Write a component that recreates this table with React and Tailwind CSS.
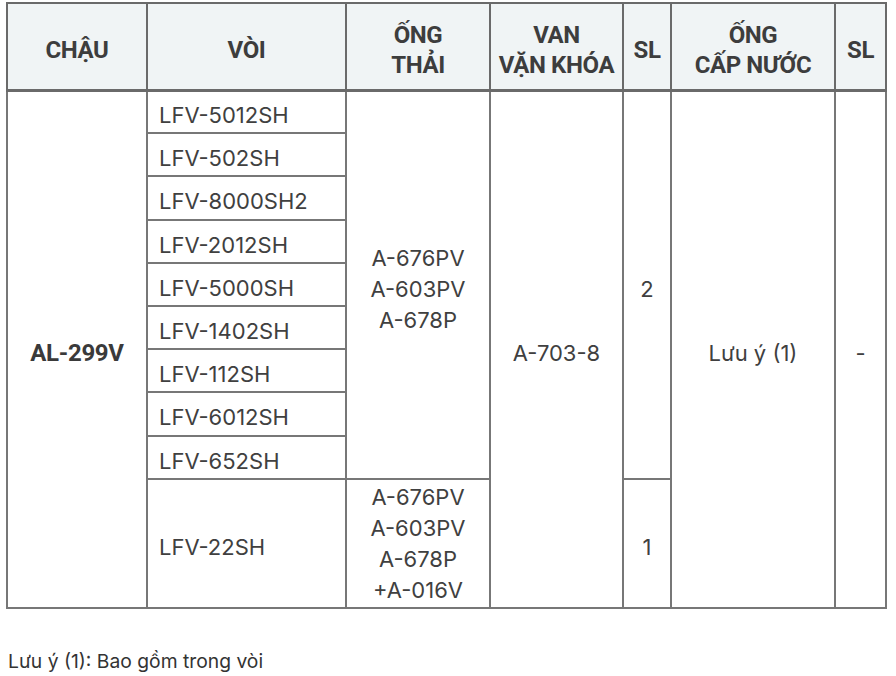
import React from "react";

const vois = [
  "LFV-5012SH",
  "LFV-502SH",
  "LFV-8000SH2",
  "LFV-2012SH",
  "LFV-5000SH",
  "LFV-1402SH",
  "LFV-112SH",
  "LFV-6012SH",
  "LFV-652SH",
];

const bd = "border-2 border-[#777]";
const hd = "border-2 border-[#6a6a6a] border-b-[3px] text-center pt-[7px]";

export default function App() {
  return (
    <div className="w-[896px] h-[676px] bg-white text-[#404040]" style={{ fontFamily: "Inter, 'Noto Sans', sans-serif" }}>
      <div className="pt-[2px] pl-[6px]">
        <table className="table-fixed border-collapse border-2 border-[#6a6a6a] w-[879px]">
          <colgroup>
            <col className="w-[140px]" />
            <col className="w-[199px]" />
            <col className="w-[144px]" />
            <col className="w-[133px]" />
            <col className="w-[48px]" />
            <col className="w-[164px]" />
            <col className="w-[51px]" />
          </colgroup>
          <thead>
            <tr className="bg-[#f0f4f5] h-[87px] text-[24px] leading-[30px] font-bold text-[#3d3d3d] tracking-[-0.4px]" style={{ fontFamily: "Roboto, sans-serif" }}>
              <th className={hd}>CHẬU</th>
              <th className={hd}>VÒI</th>
              <th className={hd}>ỐNG<br />THẢI</th>
              <th className={hd}>VAN<br />VẶN KHÓA</th>
              <th className={hd}>SL</th>
              <th className={hd}>ỐNG<br />CẤP NƯỚC</th>
              <th className={hd}>SL</th>
            </tr>
          </thead>
          <tbody className="text-[22px] leading-[31px]">
            {vois.map((v, i) => (
              <tr key={v} className="h-[43.2px]">
                {i === 0 && (
                  <td rowSpan={10} className={`${bd} text-center font-bold text-[24px] pt-[8px] tracking-[-0.3px] text-[#3a3a3a]`} style={{ fontFamily: "Roboto, sans-serif" }}>
                    AL-299V
                  </td>
                )}
                <td className={`${bd} pl-[11px] pt-[8px] pb-0`}>{v}</td>
                {i === 0 && (
                  <td rowSpan={9} className={`${bd} text-center pt-[9px]`}>
                    A-676PV<br />A-603PV<br />A-678P
                  </td>
                )}
                {i === 0 && (
                  <td rowSpan={10} className={`${bd} text-center pt-[8px]`}>A-703-8</td>
                )}
                {i === 0 && (
                  <td rowSpan={9} className={`${bd} text-center pt-[9px]`}>2</td>
                )}
                {i === 0 && (
                  <td rowSpan={10} className={`${bd} text-center pt-[8px]`}>Lưu ý (1)</td>
                )}
                {i === 0 && (
                  <td rowSpan={10} className={`${bd} text-center pt-[8px]`}>-</td>
                )}
              </tr>
            ))}
            <tr className="h-[129px]">
              <td className={`${bd} pl-[11px] pt-[8px]`}>LFV-22SH</td>
              <td className={`${bd} text-center pt-[2px]`}>
                A-676PV<br />A-603PV<br />A-678P<br />+A-016V
              </td>
              <td className={`${bd} text-center pt-[9px]`}>1</td>
            </tr>
          </tbody>
        </table>
      </div>
      <div className="mt-[38px] pl-[8px] text-[19.3px] text-[#333]">Lưu ý (1): Bao gồm trong vòi</div>
    </div>
  );
}
